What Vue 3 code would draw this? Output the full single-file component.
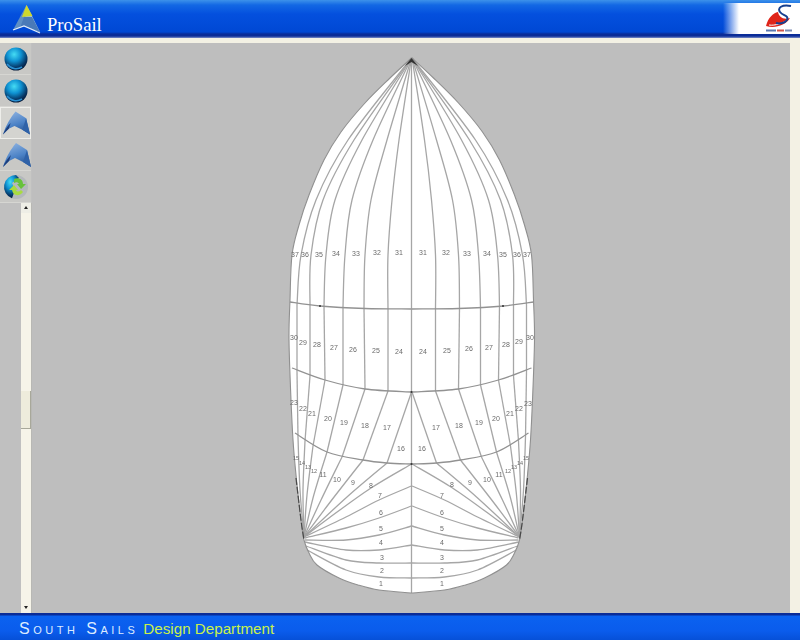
<script setup>
const MIRROR = 823.5

// catmull-rom through the given points
function smooth(pts) {
  let d = `M${pts[0][0]} ${pts[0][1]}`
  for (let i = 0; i < pts.length - 1; i++) {
    const p0 = pts[i - 1] || pts[i]
    const p1 = pts[i]
    const p2 = pts[i + 1]
    const p3 = pts[i + 2] || p2
    const c1 = [p1[0] + (p2[0] - p0[0]) / 6, p1[1] + (p2[1] - p0[1]) / 6]
    const c2 = [p2[0] - (p3[0] - p1[0]) / 6, p2[1] - (p3[1] - p1[1]) / 6]
    d += ` C${c1[0].toFixed(1)} ${c1[1].toFixed(1)} ${c2[0].toFixed(1)} ${c2[1].toFixed(1)} ${p2[0]} ${p2[1]}`
  }
  return d
}
const flip = pts => pts.map(([x, y]) => [+(MIRROR - x).toFixed(1), y])
const both = pts => [smooth(pts), smooth(flip(pts))]

const apex = [411.5, 58]
const outlineLeft = [apex, [390, 78], [365, 103], [341, 132], [324, 160], [309, 195], [299, 225], [292, 255], [290, 300], [289, 340], [291, 400], [293, 440], [296, 475], [301, 520], [304, 540], [309, 553], [317, 565], [339, 578], [358, 585], [379, 590], [411.5, 593]]
const outline = smooth(outlineLeft) + ' ' + smooth(flip(outlineLeft).reverse()).replace('M', 'L') + ' Z'

const bands = [
  [[290, 302], [320, 306], [365, 308.5], [411.5, 309]],
  [[292, 368], [325, 380], [365, 389], [411.5, 392]],
  [[295, 433], [327, 452], [363, 460], [387, 463], [411.5, 464]],
]

const seams = [
  // head panel
  [apex, [348, 140], [316, 200], [301, 255], [297, 305]],
  [apex, [354, 140], [323, 200], [311, 255], [310, 306]],
  [apex, [362, 140], [335, 200], [326, 255], [324, 306]],
  [apex, [373, 140], [352, 200], [345, 255], [343, 307]],
  [apex, [387, 140], [371, 200], [365, 255], [364, 308]],
  [apex, [399, 140], [392, 200], [388, 255], [388, 309]],
  // middle panel
  [[297, 305], [297, 372]],
  [[310, 306], [310, 376]],
  [[324, 306], [325, 380]],
  [[343, 307], [343, 385]],
  [[364, 308], [365, 389]],
  [[388, 309], [388, 391]],
  // lower panel
  [[297, 372], [298, 437]],
  [[310, 376], [305, 441]],
  [[325, 380], [313, 446]],
  [[343, 385], [327, 452]],
  [[365, 389], [342, 457]],
  [[388, 391], [363, 460]],
  [[411.5, 392], [387, 463]],
  // fan from the clew, upper rays
  [[304, 537], [300, 490], [298, 437]],
  [[304, 537], [303, 490], [305, 441]],
  [[304, 537], [307, 495], [313, 446]],
  [[304, 537], [313, 498], [327, 452]],
  [[304, 537], [321, 500], [342, 457]],
  [[304, 537], [331, 501], [363, 460]],
  [[304, 537], [347, 497], [387, 463]],
  [[304, 537], [329, 518], [371, 488], [411.5, 464]],
  // fan from the clew, lower rays
  [[304, 537], [346, 517], [379, 500], [411.5, 486]],
  [[305, 538], [346, 528], [379, 518], [411.5, 506]],
  [[305, 540], [346, 540], [379, 535], [411.5, 526]],
  [[305, 542], [346, 550], [379, 550], [411.5, 545]],
  [[306, 546], [346, 560], [379, 563], [411.5, 563]],
  [[307, 550], [346, 570], [379, 577], [411.5, 578]],
]

const seamPaths = seams.flatMap(both)
const bandPaths = bands.flatMap(both)
const clewEdge = both([[296, 478], [301, 520], [304, 540]])

const labels = [
  [37, 295, 254], [36, 305, 254], [35, 319, 254], [34, 336, 253], [33, 356, 253], [32, 377, 252], [31, 399, 252],
  [31, 423, 252], [32, 446, 252], [33, 467, 253], [34, 487, 253], [35, 503, 254], [36, 517, 254], [37, 527, 254],
  [30, 294, 337], [29, 303, 342], [28, 317, 344], [27, 334, 347], [26, 353, 349], [25, 376, 350], [24, 399, 351],
  [24, 423, 351], [25, 447, 350], [26, 469, 348], [27, 489, 347], [28, 506, 344], [29, 519, 341], [30, 530, 337],
  [23, 294, 402], [22, 303, 408], [21, 312, 413], [20, 328, 418], [19, 344, 422], [18, 365, 425], [17, 387, 427], [16, 401, 448],
  [16, 422, 448], [17, 436, 427], [18, 459, 425], [19, 479, 422], [20, 496, 418], [21, 510, 413], [22, 519, 408], [23, 528, 403],
  [15, 296, 457, 1], [14, 302, 462, 1], [13, 308, 466, 1], [12, 314, 470, 1], [11, 323, 474], [10, 337, 479], [9, 353, 482], [8, 371, 485],
  [7, 380, 495], [6, 381, 512], [5, 381, 528], [4, 381, 542], [3, 382, 557], [2, 382, 570], [1, 381, 583],
  [8, 452, 484], [9, 470, 482], [10, 487, 479], [11, 499, 474], [12, 508, 470, 1], [13, 514, 466, 1], [14, 520, 462, 1], [15, 526, 457, 1],
  [7, 442, 495], [6, 442, 512], [5, 442, 528], [4, 442, 542], [3, 442, 557], [2, 442, 570], [1, 442, 583],
]

const dots = [[320, 306], [503, 306], [411.5, 392], [411.5, 464]]

const tools = [
  { id: 1, kind: 'globe' },
  { id: 2, kind: 'globe' },
  { id: 3, kind: 'sail', active: true },
  { id: 4, kind: 'sail' },
  { id: 5, kind: 'refresh' },
]
</script>

<template>
  <div class="app">
    <header class="topbar">
      <svg class="logo" width="30" height="32" viewBox="0 0 30 32">
        <path d="M14.5 3 L28 30 L12 24 Z" fill="#9fc0e6" />
        <path d="M14.5 3 L1 28 L12 24 Z" fill="#5f8fc4" />
        <path d="M12 15 L8 26 L12 24 L28 30 L20 15 Z" fill="#4a7ab8" />
        <path d="M14.5 3 L20.5 14 L10 15 Z" fill="#cfd82e" />
        <path d="M1 28 L12 24 L28 31" fill="none" stroke="#e4eefa" stroke-width="1.2" />
      </svg>
      <span class="brand">ProSail</span>
      <div class="corner">
        <svg width="28" height="29" viewBox="0 0 28 29">
          <path d="M1 22 C3 14 8 9 13 8 C14 13 18 16 25 14 C21 21 10 25 1 22 Z" fill="#df2419" />
          <path d="M4 21 C10 22 18 19 22 16" fill="none" stroke="#fff" stroke-width="1" />
          <path d="M26 2 C17 0 12 4 15 8 C18 12 24 11 22 16 C20 19 15 20 11 19" fill="none" stroke="#17408f" stroke-width="2" />
          <rect x="1" y="25.5" width="10" height="2" fill="#5b78b0" />
          <rect x="12" y="25.5" width="7" height="2" fill="#d0544a" />
          <rect x="20" y="25.5" width="7" height="2" fill="#7a8cb4" />
        </svg>
      </div>
    </header>

    <div class="body">
      <aside class="side">
        <svg class="defs" width="0" height="0">
          <defs>
            <radialGradient id="ball" cx="0.42" cy="0.3" r="0.75">
              <stop offset="0" stop-color="#45dcf4" />
              <stop offset="0.4" stop-color="#0f92d2" />
              <stop offset="0.75" stop-color="#063a6a" />
              <stop offset="1" stop-color="#03102a" />
            </radialGradient>
            <linearGradient id="wing" x1="0.3" y1="0" x2="0.7" y2="1">
              <stop offset="0" stop-color="#8db2e0" />
              <stop offset="0.55" stop-color="#4b82c6" />
              <stop offset="1" stop-color="#24508f" />
            </linearGradient>
          </defs>
        </svg>
        <div v-for="t in tools" :key="t.id" class="tool" :class="{ active: t.active }">
          <svg v-if="t.kind === 'globe'" width="30" height="30" viewBox="0 0 30 30">
            <circle cx="15" cy="15" r="11.5" fill="url(#ball)" />
            <path d="M6 20 C10 25 16 26 21 23" fill="none" stroke="#2a8fd0" stroke-width="1.6" />
          </svg>
          <svg v-else-if="t.kind === 'sail'" width="30" height="30" viewBox="0 0 30 30">
            <path d="M2 27 C5 17 10 9 15 3 L26 10 L30 27 L22 22 L14 18 L8 21 Z" fill="url(#wing)" />
            <path d="M2 27 C4 22 7 18 10 15 L8 21 Z" fill="#1d3f7c" />
            <path d="M26 10 L30 27 L22 22 Z" fill="#2f62a8" />
          </svg>
          <svg v-else width="30" height="30" viewBox="0 0 30 30">
            <circle cx="15" cy="15" r="12" fill="#b4b8bc" />
            <path d="M15 3 A12 12 0 0 0 11 26.3 L14 18 L11 11 L18 6 Z" fill="url(#ball)" />
            <path d="M13 7 C17 5 22 7 22 12 L25 12 L20 17 L16 12 L18 12 C17 10 15 10 13 11 Z" fill="#67c23c" />
            <path d="M22 20 C18 25 12 24 11 18 L8 18 L13 13 L17 18 L15 18 C16 20 18 20 20 18 Z" fill="#a8dc40" />
          </svg>
        </div>
        <div class="lower">
          <div class="scroll">
            <div class="arrow up" />
            <div class="thumb" />
            <div class="arrow down" />
          </div>
        </div>
      </aside>

      <main class="canvas">
        <svg class="sail" width="758" height="570" viewBox="32 43 758 570">
          <path :d="outline" fill="#fff" />
          <g fill="none" stroke="#a6a6a6" stroke-width="1.3">
            <path d="M411.5 58 V593" />
            <path v-for="(d, i) in seamPaths" :key="'s' + i" :d="d" />
          </g>
          <g fill="none" stroke="#929292" stroke-width="1.3">
            <path v-for="(d, i) in bandPaths" :key="'b' + i" :d="d" />
          </g>
          <path :d="outline" fill="none" stroke="#909090" stroke-width="1.1" />
          <g fill="none" stroke="#484848" stroke-width="1.2" stroke-dasharray="7 2">
            <path v-for="(d, i) in clewEdge" :key="'c' + i" :d="d" />
          </g>
          <path d="M405 66 L411.5 58 L418 66 L411.5 62 Z" fill="#333" />
          <circle v-for="(p, i) in dots" :key="'d' + i" :cx="p[0]" :cy="p[1]" r="1" fill="#333" />
          <text
            v-for="(l, i) in labels"
            :key="'l' + i"
            :x="l[1]"
            :y="l[2] + 2.5"
            class="num"
            :class="{ tight: l[3] }"
            text-anchor="middle"
          >{{ l[0] }}</text>
        </svg>
      </main>
      <div class="edge" />
    </div>

    <footer class="bottombar">
      <span class="company">South Sails</span>
      <span class="dept">Design Department</span>
    </footer>
  </div>
</template>

<style scoped>
.app {
  display: flex;
  flex-direction: column;
  width: 800px;
  height: 640px;
  overflow: hidden;
  background: #f3f1e4;
}
.topbar {
  display: flex;
  align-items: flex-start;
  flex: none;
  height: 38px;
  box-sizing: border-box;
  padding-left: 12px;
  background: linear-gradient(to bottom, #3d92ea 0, #1368e4 5px, #0450de 14px, #0048d4 32px, #0a2c98 34px, #0a2c98 36px, #7d8fc8 38px);
}
.logo {
  flex: none;
  margin-top: 2px;
}
.brand {
  margin: 14px 0 0 5px;
  font-family: "Liberation Serif", serif;
  font-size: 18.6px;
  line-height: 21px;
  color: #fff;
}
.corner {
  display: flex;
  align-items: center;
  justify-content: flex-end;
  width: 70px;
  height: 31px;
  margin: 3px 0 0 auto;
  padding-right: 7px;
  background: linear-gradient(to right, rgba(255, 255, 255, 0) 0, #fff 16px);
}
.body {
  display: flex;
  flex: 1;
  min-height: 0;
  padding-top: 5px;
}
.side {
  display: flex;
  flex-direction: column;
  flex: none;
  width: 32px;
  background: #c0c0c0;
}
.defs {
  position: absolute;
}
.tool {
  display: flex;
  align-items: center;
  justify-content: center;
  flex: none;
  box-sizing: border-box;
  width: 31px;
  height: 32px;
  background: #c8c8c5;
  border-bottom: 1px solid #d6d6d2;
}
.tool.active {
  background: #d4d4d0;
  border: 1px solid #eeeeea;
}
.lower {
  display: flex;
  flex: 1;
  min-height: 0;
  justify-content: flex-end;
}
.scroll {
  display: flex;
  flex-direction: column;
  width: 11px;
  background: #f6f4e9;
  border-right: 1px solid #b8b8b4;
  box-sizing: border-box;
}
.arrow {
  position: relative;
  flex: none;
  height: 10px;
  background: #eeeee6;
}
.arrow::after {
  content: '';
  position: absolute;
  left: 3px;
  top: 3px;
  border-left: 2px solid transparent;
  border-right: 2px solid transparent;
}
.arrow.up::after {
  border-bottom: 3px solid #222;
}
.arrow.down::after {
  border-top: 3px solid #222;
}
.arrow.down {
  background: #f6f4e9;
}
.thumb {
  flex: none;
  height: 38px;
  margin: 178px 0 auto;
  background: #eeecdc;
  border-right: 1px solid #a8a89a;
  border-bottom: 1px solid #a8a89a;
  box-sizing: border-box;
}
.canvas {
  flex: 1;
  min-width: 0;
  background: #bebebe;
  overflow: hidden;
}
.sail {
  display: block;
  filter: blur(0.35px);
}
.num {
  font-family: "Liberation Sans", sans-serif;
  font-size: 7px;
  fill: #6a6a6a;
}
.num.tight {
  font-size: 5.5px;
}
.edge {
  flex: none;
  width: 10px;
  background: #f3f1e4;
}
.bottombar {
  display: flex;
  align-items: baseline;
  flex: none;
  height: 27px;
  box-sizing: border-box;
  padding: 7px 0 0 19px;
  background: linear-gradient(to bottom, #0a2c98 0, #0a2c98 2px, #0b62f0 3px, #0a5cec 18px, #0650d8 27px);
}
.company {
  font-family: "Liberation Sans", sans-serif;
  font-variant: small-caps;
  font-size: 16px;
  line-height: 18px;
  letter-spacing: 3.5px;
  color: #dcebff;
}
.dept {
  margin-left: 5px;
  font-family: "Liberation Sans", sans-serif;
  font-size: 15.2px;
  line-height: 18px;
  color: #c8f04c;
}
</style>
